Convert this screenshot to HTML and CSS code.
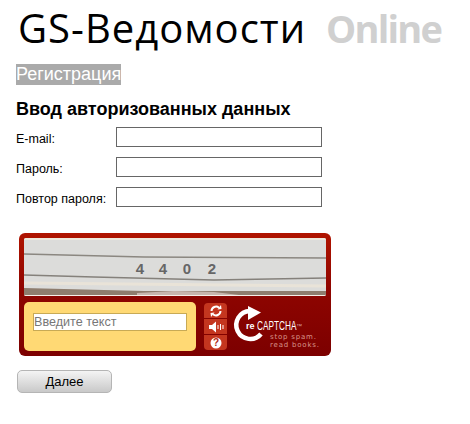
FILE: index.html
```html
<!DOCTYPE html>
<html lang="ru">
<head>
<meta charset="utf-8">
<title>Регистрация</title>
<link rel="stylesheet" href="styles.css">
</head>
<body>
<header class="brand">
  <span class="brand-name">GS-Ведомости</span>
  <span class="brand-tag">Online</span>
</header>
<div class="crumb"><span class="crumb-text">Регистрация</span></div>
<h2 class="section-title">Ввод авторизованных данных</h2>
<form class="form">
  <div class="row"><label class="label">E-mail:</label><input class="field" type="text"></div>
  <div class="row"><label class="label">Пароль:</label><input class="field" type="password"></div>
  <div class="row"><label class="label">Повтор пароля:</label><input class="field" type="password"></div>

  <div class="captcha">
    <div class="captcha-image">
      <svg class="captcha-lines" viewBox="0 0 302 58" width="302" height="58" aria-hidden="true">
        <rect width="302" height="58" fill="#dcdcda"/>
        <rect y="0" width="302" height="2" fill="#eee8dc"/>
        <path d="M0 16 L120 19 L302 20" fill="none" stroke="#8b8780" stroke-width="1.600"/>
        <path d="M0 37 L70 39 L190 42 L302 40" fill="none" stroke="#85817b" stroke-width="1.600"/>
        <path d="M0 45 L302 48" stroke="#e9e3d8" stroke-width="3" fill="none"/>
        <path d="M0 50 L120 53 L302 53 L302 57 L0 57 Z" fill="#8e7d6e"/>
        <path d="M113 55 L150 53 L190 54 L215 57 L113 57 Z" fill="#c7b6ae"/>
        <rect y="57" width="302" height="1" fill="#f6eee8"/>
        <text class="captcha-digit" x="116" y="36">4</text>
        <text class="captcha-digit" x="139" y="36">4</text>
        <text class="captcha-digit" x="163" y="36">0</text>
        <text class="captcha-digit" x="188" y="36">2</text>
      </svg>
    </div>
    <div class="captcha-bottom">
      <div class="captcha-entry">
        <input class="captcha-input" type="text" placeholder="Введите текст">
      </div>
      <div class="captcha-tools">
        <span class="tool">
          <svg viewBox="0 0 16 14" width="16" height="14" aria-hidden="true"><path d="M3.500 7a4.500 4.500 0 0 1 7.500-3.200M12.500 7a4.500 4.500 0 0 1-7.500 3.200" fill="none" stroke="#fff" stroke-width="2"/><path d="M9.500 5.500l4-.5-.5-4zM6.500 8.500l-4 .5.500 4z" fill="#fff"/></svg>
        </span>
        <span class="tool">
          <svg viewBox="0 0 18 14" width="18" height="14" aria-hidden="true"><path d="M2 5h3l4-3.500v11L5 9H2z" fill="#fff"/><path d="M11 5v4M13.500 4v6M16 5v4" stroke="#fff" stroke-width="1"/></svg>
        </span>
        <span class="tool">
          <svg viewBox="0 0 14 14" width="14" height="14" aria-hidden="true"><circle cx="7" cy="7" r="5.500" fill="#fff"/><text class="help-mark" x="7" y="10">?</text></svg>
        </span>
      </div>
      <div class="captcha-logo">
        <svg class="logo-ring" viewBox="0 0 34 36" width="34" height="36" aria-hidden="true"><path d="M28 28A14 14 0 1 1 17 5" fill="none" stroke="#fff" stroke-width="4.500"/><path d="M15 0l13 6.500-13 7.500z" fill="#fff"/></svg>
        <div class="logo-text">
          <div class="logo-name"><b class="logo-re">re</b><span class="logo-word">CAPTCHA</span><span class="logo-tm">™</span></div>
          <div class="logo-slogan">stop spam.<br>read books.</div>
        </div>
      </div>
    </div>
  </div>

  <button class="next" type="button">Далее</button>
</form>
</body>
</html>
```
FILE: styles.css
```css
* { box-sizing: border-box; }
html, body { margin: 0; background: #fff; }
body {
  width: 470px;
  height: 424px;
  overflow: hidden;
  padding: 0 0 0 16px;
  font-family: "Liberation Sans", Arial, sans-serif;
  font-size: 12px;
  color: #000;
}
.brand {
  display: flex;
  align-items: baseline;
  height: 64px;
  padding: 0 0 0 2px;
  white-space: nowrap;
}
.brand-name { font-family: "Open Sans", sans-serif; font-size: 40px; letter-spacing: 1px; }
.brand-tag { font-family: "Open Sans", sans-serif; font-size: 38px; font-weight: 700; letter-spacing: -1.800px; color: #d0d0d0; margin-left: 20px; }
.crumb { height: 21px; line-height: 21px; font-size: 18px; }
.crumb-text { display: inline-block; height: 21px; background: #aaa; color: #fff; }
.section-title { margin: 14px 0 0; height: 28px; font-size: 18px; line-height: 21px; font-weight: 700; }
.form { display: flex; flex-direction: column; }
.row { display: flex; align-items: center; height: 20px; margin-bottom: 10px; }
.label { width: 100px; flex: none; font-size: 12.500px; margin-top: 4px; }
.field { width: 206px; height: 20px; border: 1px solid #666; background: #fff; padding: 0; margin: 0; }
.captcha {
  width: 312px;
  height: 123px;
  margin: 16px 0 0 3px;
  padding: 5px;
  border-radius: 6px;
  background: linear-gradient(#b01400 0, #8f0500 45%, #7c0000 100%);
}
.captcha-image { height: 58px; overflow: hidden; border-radius: 2px; }
.captcha-lines { display: block; }
.captcha-digit { font-family: "Liberation Sans", sans-serif; font-size: 15px; font-weight: 700; fill: #666; text-anchor: middle; }
.captcha-bottom { display: flex; margin-top: 6px; height: 49px; }
.captcha-entry {
  flex: none;
  width: 172px;
  height: 49px;
  padding: 11px 0 0 9px;
  border-radius: 5px;
  background: #ffd974;
}
.captcha-input {
  display: block;
  width: 154px;
  height: 18px;
  padding: 0;
  margin: 0;
  border: 1px solid #c8aa55;
  background: #fff;
  font-family: "Liberation Sans", sans-serif;
  font-size: 12.600px;
}
.captcha-input::placeholder { color: #777; opacity: 1; }
.captcha-tools {
  flex: none;
  display: flex;
  flex-direction: column;
  gap: 1px;
  width: 23px;
  height: 47px;
  margin: 1px 0 0 8px;
  border-radius: 4px;
  overflow: hidden;
}
.tool { flex: 1; display: flex; align-items: center; justify-content: center; background: #c4361f; }
.help-mark { font-family: "Liberation Sans", sans-serif; font-size: 10px; font-weight: 700; fill: #b02a15; text-anchor: middle; }
.captcha-logo { flex: none; display: flex; margin-left: 6px; }
.logo-ring { flex: none; margin-top: 4px; overflow: visible; }
.logo-text { margin: 18px 0 0 -21px; color: #fff; }
.logo-name { font-family: "Liberation Sans", sans-serif; font-size: 12.500px; line-height: 12px; white-space: nowrap; display: flex; align-items: center; }
.logo-re { font-size: 9px; line-height: 12px; width: 11px; flex: none; }
.logo-word { display: inline-block; width: 39px; flex: none; transform: scaleX(.66); transform-origin: left center; }
.logo-tm { font-size: 6px; color: #d9a8a0; align-self: flex-start; }
.logo-slogan { font-family: "DejaVu Sans", sans-serif; font-size: 7px; line-height: 8.200px; letter-spacing: 0.800px; color: #d8938a; margin: 1px 0 0 24px; white-space: nowrap; }
.next {
  width: 95px;
  height: 23px;
  margin: 14px 0 0 1px;
  padding: 0;
  border: 1px solid #b5b5b5;
  border-radius: 5px;
  background: linear-gradient(#f4f4f4, #c9c9c9);
  font-family: "Liberation Sans", sans-serif;
  font-size: 13px;
  color: #000;
}
```
